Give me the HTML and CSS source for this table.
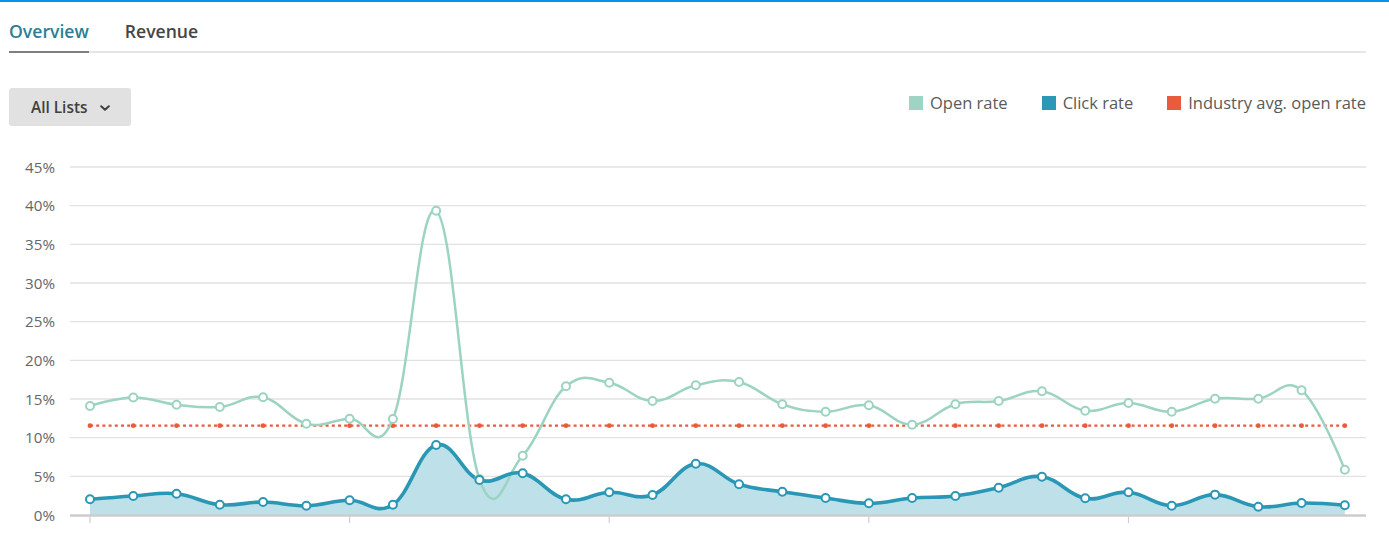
FILE: index.html
```html
<!DOCTYPE html>
<html lang="en">
<head>
<meta charset="utf-8">
<title>Overview</title>
<link rel="stylesheet" href="styles.css">
</head>
<body>
<div class="page">
  <nav class="tabs">
    <a class="tab tab--active" href="#">Overview</a>
    <a class="tab" href="#">Revenue</a>
  </nav>
  <div class="toolbar">
    <button class="select" type="button">All Lists<svg class="chev" viewBox="0 0 10 6" width="10" height="6"><path d="M1.2 1.2L5 4.8 8.8 1.2"/></svg></button>
    <ul class="legend">
      <li class="legend__item"><span class="swatch swatch--open"></span>Open rate</li>
      <li class="legend__item"><span class="swatch swatch--click"></span>Click rate</li>
      <li class="legend__item"><span class="swatch swatch--avg"></span>Industry avg. open rate</li>
    </ul>
  </div>
  <svg class="chart" id="chart" viewBox="0 150 1389 386" width="1389" height="386">
    <g class="grid">
      <line class="grid-line" x1="70" x2="1366" y1="167" y2="167"/>
      <line class="grid-line" x1="70" x2="1366" y1="205.7" y2="205.7"/>
      <line class="grid-line" x1="70" x2="1366" y1="244.3" y2="244.3"/>
      <line class="grid-line" x1="70" x2="1366" y1="283" y2="283"/>
      <line class="grid-line" x1="70" x2="1366" y1="321.7" y2="321.7"/>
      <line class="grid-line" x1="70" x2="1366" y1="360.3" y2="360.3"/>
      <line class="grid-line" x1="70" x2="1366" y1="399" y2="399"/>
      <line class="grid-line" x1="70" x2="1366" y1="437.7" y2="437.7"/>
      <line class="grid-line" x1="70" x2="1366" y1="476.3" y2="476.3"/>
    </g>
    <g class="ylabels">
      <text x="55" y="172.5">45%</text>
      <text x="55" y="211.2">40%</text>
      <text x="55" y="249.8">35%</text>
      <text x="55" y="288.5">30%</text>
      <text x="55" y="327.2">25%</text>
      <text x="55" y="365.8">20%</text>
      <text x="55" y="404.5">15%</text>
      <text x="55" y="443.2">10%</text>
      <text x="55" y="481.8">5%</text>
      <text x="55" y="520.5">0%</text>
    </g>
    <g id="series"></g>
  </svg>
</div>
<script src="script.js"></script>
</body>
</html>
```

FILE: styles.css
```css
* { box-sizing: border-box; }
html, body { margin: 0; padding: 0; }
body {
  font-family: "Open Sans", "Liberation Sans", Arial, sans-serif;
  background: #fff;
  color: #333;
  overflow: hidden;
}
.page {
  border-top: 2px solid #0a93ee;
  width: 1389px;
  height: 536px;
}
.tabs {
  display: flex;
  gap: 36px;
  margin: 0 23px 0 9px;
  border-bottom: 2px solid #e6e6e6;
}
.tab {
  display: block;
  padding: 17px 0 8px;
  font-size: 17.6px;
  line-height: 24px;
  font-weight: 600;
  color: #454545;
  text-decoration: none;
  margin-bottom: -2px;
  border-bottom: 2px solid transparent;
}
.tab--active {
  color: #2b7f96;
  border-bottom-color: #7f7f7f;
}
.toolbar {
  display: flex;
  justify-content: space-between;
  align-items: flex-start;
  padding: 0 23px 0 9px;
  margin-top: 35px;
}
.select {
  display: flex;
  align-items: center;
  gap: 13px;
  height: 38px;
  padding: 0 21px 0 22px;
  border: 0;
  border-radius: 3px;
  background: #e1e1e1;
  font-family: inherit;
  font-size: 15.4px;
  font-weight: 600;
  color: #404040;
}
.chev { display: block; margin-top: 2px; }
.chev path { fill: none; stroke: #404040; stroke-width: 2; stroke-linecap: round; stroke-linejoin: round; }
.legend {
  display: flex;
  gap: 34px;
  list-style: none;
  margin: 4px 0 0;
  padding: 0;
}
.legend__item {
  display: flex;
  align-items: center;
  font-size: 16.5px;
  line-height: 22px;
  color: #5a5a5a;
}
.swatch {
  width: 14px;
  height: 14px;
  margin-right: 7px;
}
.swatch--open { background: #9fd4c4; }
.swatch--click { background: #2b98b6; }
.swatch--avg { background: #ea5a3d; }
.chart {
  display: block;
  margin-top: 24px;
}
.grid-line { stroke: #e2e2e2; stroke-width: 1.3; }
.ylabels text {
  font-family: "Open Sans", "Liberation Sans", Arial, sans-serif;
  font-size: 15.2px;
  fill: #666;
  text-anchor: end;
}
.axis-line { stroke: #cccccc; stroke-width: 2.5; }
.tick { stroke: #cfcfcf; stroke-width: 1.2; }
.area-click { fill: #bee0e9; stroke: none; }
.line-open { fill: none; stroke: #9dd3c2; stroke-width: 2.5; }
.line-click { fill: none; stroke: #2a97b5; stroke-width: 3.6; stroke-linejoin: round; }
.line-avg { fill: none; stroke: #ea5a3d; stroke-width: 2.2; stroke-dasharray: 3 3.2; }
.dot-avg { fill: #ea5a3d; }
.marker-open { fill: #fff; stroke: #9dd3c2; stroke-width: 2; }
.marker-click { fill: #fff; stroke: #2a97b5; stroke-width: 2; }
```

FILE: script.js
```js
(function () {
  var NS = "http://www.w3.org/2000/svg";
  var X0 = 90, DX = 43.27, Y0 = 515, K = 7.733;
  var open = [14.1, 15.2, 14.26, 13.97, 15.22, 11.81, 12.45, 12.41, 39.35, 4.66,
    7.67, 16.64, 17.11, 14.74, 16.77, 17.2, 14.32, 13.36, 14.19, 11.68,
    14.33, 14.74, 16.0, 13.49, 14.48, 13.36, 15.04, 15.04, 16.13, 5.86];
  var click = [2.03, 2.46, 2.75, 1.33, 1.68, 1.2, 1.9, 1.33, 9.05, 4.53,
    5.39, 2.03, 2.94, 2.59, 6.63, 3.97, 3.01, 2.2, 1.51, 2.2,
    2.46, 3.53, 4.95, 2.16, 2.94, 1.2, 2.63, 1.07, 1.55, 1.25];
  var avg = 11.55;

  function f(n) { return Math.round(n * 100) / 100; }
  function pts(arr) { return arr.map(function (v, i) { return [X0 + i * DX, Y0 - v * K]; }); }

  function spline(p) {
    var sm = 1.5, den = sm + 1, n = p.length;
    var c = p.map(function (pt, i) {
      if (i === 0 || i === n - 1) return null;
      var lx = p[i - 1][0], ly = p[i - 1][1], x = pt[0], y = pt[1], nx = p[i + 1][0], ny = p[i + 1][1];
      var lcx = (sm * x + lx) / den, lcy = (sm * y + ly) / den;
      var rcx = (sm * x + nx) / den, rcy = (sm * y + ny) / den;
      var corr = ((rcy - lcy) * (rcx - x)) / (rcx - lcx) + y - rcy;
      return [lcx, lcy + corr, rcx, rcy + corr];
    });
    var d = "M" + f(p[0][0]) + " " + f(p[0][1]);
    for (var i = 1; i < n; i++) {
      var a = c[i - 1] ? [c[i - 1][2], c[i - 1][3]] : p[i - 1];
      var b = c[i] ? [c[i][0], c[i][1]] : p[i];
      d += " C" + f(a[0]) + " " + f(a[1]) + " " + f(b[0]) + " " + f(b[1]) + " " + f(p[i][0]) + " " + f(p[i][1]);
    }
    return d;
  }

  function el(name, attrs, parent) {
    var e = document.createElementNS(NS, name);
    for (var k in attrs) e.setAttribute(k, attrs[k]);
    parent.appendChild(e);
    return e;
  }

  var g = document.getElementById("series");
  var po = pts(open), pc = pts(click);
  var last = X0 + (open.length - 1) * DX;

  var cd = spline(pc);
  el("path", { "class": "area-click", d: cd + " L" + f(last) + " " + Y0 + " L" + X0 + " " + Y0 + " Z" }, g);
  el("line", { "class": "axis-line", x1: 70, x2: 1366, y1: 515.5, y2: 515.5 }, g);
  for (var t = 0; t < 5; t++) {
    var tx = f(X0 + t * 6 * DX);
    el("line", { "class": "tick", x1: tx, x2: tx, y1: 516.5, y2: 523 }, g);
  }
  var ay = f(Y0 - avg * K);
  el("line", { "class": "line-avg", x1: X0, x2: f(last), y1: ay, y2: ay }, g);
  po.forEach(function (p) { el("circle", { "class": "dot-avg", cx: f(p[0]), cy: ay, r: 2.4 }, g); });

  el("path", { "class": "line-open", d: spline(po) }, g);
  el("path", { "class": "line-click", d: cd }, g);
  po.forEach(function (p) { el("circle", { "class": "marker-open", cx: f(p[0]), cy: f(p[1]), r: 4 }, g); });
  pc.forEach(function (p) { el("circle", { "class": "marker-click", cx: f(p[0]), cy: f(p[1]), r: 4 }, g); });
})();
```
